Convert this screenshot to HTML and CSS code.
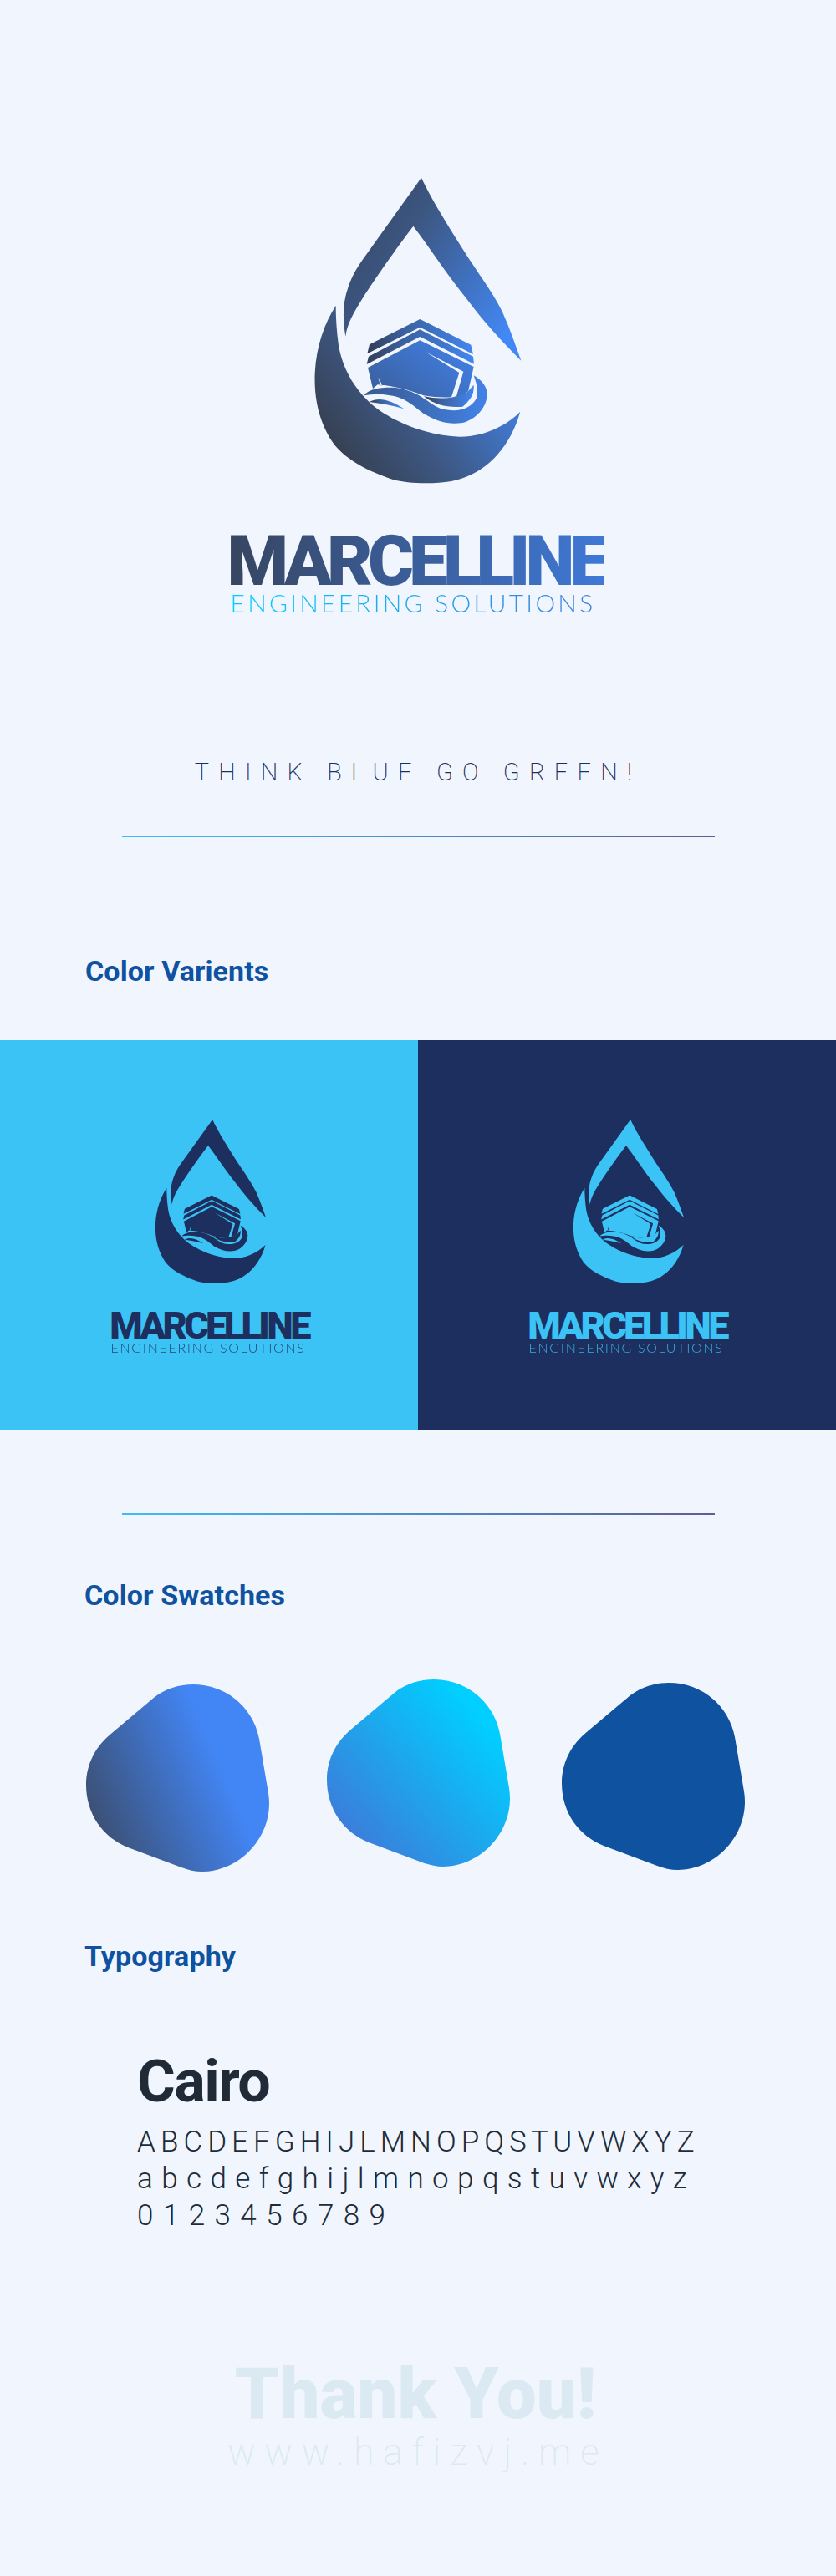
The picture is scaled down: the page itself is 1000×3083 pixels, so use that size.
FILE: index.html
```html
<!DOCTYPE html>
<html lang="en">
<head>
<meta charset="utf-8">
<title>Marcelline Engineering Solutions</title>
<link rel="stylesheet" href="styles.css">
</head>
<body>
<svg class="defs" aria-hidden="true">
  <defs>
    <linearGradient id="g-arc" x1="0" y1="0.1" x2="1" y2="0.75">
      <stop offset="0" stop-color="#364562"/><stop offset="0.35" stop-color="#3c5680"/><stop offset="1" stop-color="#4388f5"/>
    </linearGradient>
    <linearGradient id="g-cres" x1="0.1" y1="0.85" x2="1" y2="0.3">
      <stop offset="0" stop-color="#363f50"/><stop offset="0.4" stop-color="#3d5884"/><stop offset="1" stop-color="#4388f5"/>
    </linearGradient>
    <linearGradient id="g-boat" x1="0" y1="0.5" x2="1" y2="0.5">
      <stop offset="0" stop-color="#323e55"/><stop offset="0.35" stop-color="#3b62a0"/><stop offset="1" stop-color="#4286f0"/>
    </linearGradient>
    <linearGradient id="g-hull" x1="0" y1="0.9" x2="1" y2="0.2">
      <stop offset="0" stop-color="#3a5f9c"/><stop offset="1" stop-color="#4280e6"/>
    </linearGradient>
    <linearGradient id="g-wave" x1="0" y1="0.5" x2="1" y2="0.5">
      <stop offset="0" stop-color="#3a5a90"/><stop offset="1" stop-color="#4282e6"/>
    </linearGradient>
    <linearGradient id="g-sw1" x1="0" y1="0.85" x2="0.9" y2="0.45">
      <stop offset="0" stop-color="#3b4a66"/><stop offset="0.85" stop-color="#4285f4"/>
    </linearGradient>
    <linearGradient id="g-sw2" x1="0.1" y1="0.9" x2="0.85" y2="0.2">
      <stop offset="0" stop-color="#3f78d8"/><stop offset="1" stop-color="#00cfff"/>
    </linearGradient>
    <path id="arc" d="M432 38C470 120 540 230 600 325C650 400 700 470 725 525C750 580 770 640 790 695C720 625 660 560 600 480C530 395 470 300 403 212C340 295 270 395 225 465C190 520 165 565 160 608C150 550 148 490 170 430C185 385 205 355 230 320Z"/>
    <path id="crescent" d="M125 497C85 560 55 640 50 740C47 820 60 900 105 975C150 1050 250 1095 330 1122C380 1136 470 1140 540 1128C660 1105 750 1010 787 878C730 935 650 968 570 968C470 966 350 925 270 865C200 810 150 730 135 640C128 590 125 540 125 497Z"/>
    <path id="band1" d="M427 546L610 638L618 672L427 575L238 670L246 637Z"/>
    <path id="band2" d="M427 583L618 680L621 707L427 609L236 708L243 680Z"/>
    <path id="hull" fill-rule="evenodd" d="M427 622L620 717L600 805C590 815 575 822 562 823L542 826C500 828 470 825 440 820C400 805 340 785 275 781L258 795L240 720ZM445 662L583 734L557 826L540 826L568 738ZM278 755L292 784L284 784Z"/>
    <path id="wave" d="M226 820C245 795 290 790 340 792C380 797 420 815 440 830C480 858 500 872 530 872C570 878 610 865 630 830L632 785L620 748C650 765 668 790 668 815C668 860 630 905 580 918C530 925 490 915 440 885C400 855 370 825 320 820C290 812 250 815 226 820Z"/>
    <path id="sliver" d="M440 822C490 835 550 832 595 810L620 782C622 815 610 835 580 860C530 865 480 855 440 822Z"/>
    <path id="crest" d="M245 843C280 825 320 835 370 868C330 855 285 848 245 843Z"/>
    <g id="mark">
      <use href="#arc"/><use href="#crescent"/><use href="#band1"/><use href="#band2"/><use href="#hull"/><use href="#wave"/><use href="#sliver"/><use href="#crest"/>
    </g>
    <path id="blob" d="M82 15C95 5 112 0 128 0C168 0 200 28 207 65L218 130C226 180 185 224 139 224C130 224 122 222 114 219L50 195C20 183 0 155 0 120C0 95 12 73 31 58Z"/>
  </defs>
</svg>

<main class="page">
  <header class="hero">
    <svg class="hero-mark" viewBox="0 0 840 1200" role="img" aria-label="Marcelline logo">
      <use href="#arc" fill="url(#g-arc)"/>
      <use href="#crescent" fill="url(#g-cres)"/>
      <use href="#band1" fill="url(#g-boat)"/>
      <use href="#band2" fill="url(#g-boat)"/>
      <use href="#hull" fill="url(#g-hull)"/>
      <use href="#wave" fill="url(#g-wave)"/>
      <use href="#sliver" fill="url(#g-boat)"/>
      <use href="#crest" fill="url(#g-boat)"/>
    </svg>
    <div class="wordmark wordmark-hero">MARCELLINE</div>
    <div class="subline subline-hero">ENGINEERING SOLUTIONS</div>
  </header>

  <p class="tagline">THINK BLUE GO GREEN!</p>
  <div class="rule rule-first"></div>

  <h2 class="title title-variants">Color Varients</h2>

  <section class="variants">
    <div class="variant variant-light">
      <svg class="variant-mark" viewBox="0 0 840 1200" aria-hidden="true"><use href="#mark"/></svg>
      <div class="wordmark wordmark-small">MARCELLINE</div>
      <div class="subline subline-small">ENGINEERING SOLUTIONS</div>
    </div>
    <div class="variant variant-dark">
      <svg class="variant-mark" viewBox="0 0 840 1200" aria-hidden="true"><use href="#mark"/></svg>
      <div class="wordmark wordmark-small">MARCELLINE</div>
      <div class="subline subline-small">ENGINEERING SOLUTIONS</div>
    </div>
  </section>

  <div class="rule rule-second"></div>

  <h2 class="title title-swatches">Color Swatches</h2>

  <section class="swatches">
    <svg class="swatch swatch-a" viewBox="0 0 220 224" aria-hidden="true"><use href="#blob" fill="url(#g-sw1)"/></svg>
    <svg class="swatch swatch-b" viewBox="0 0 220 224" aria-hidden="true"><use href="#blob" fill="url(#g-sw2)"/></svg>
    <svg class="swatch swatch-c" viewBox="0 0 220 224" aria-hidden="true"><use href="#blob" fill="#0f52a0"/></svg>
  </section>

  <h2 class="title title-type">Typography</h2>

  <section class="specimen">
    <div class="specimen-name">Cairo</div>
    <div class="specimen-line specimen-upper">A B C D E F G H I J L M N O P Q S T U V W X Y Z</div>
    <div class="specimen-line specimen-lower">a b c d e f g h i j l m n o p q s t u v w x y z</div>
    <div class="specimen-line specimen-digits">0 1 2 3 4 5 6 7 8 9</div>
  </section>

  <footer class="thanks">
    <div class="thanks-big">Thank You!</div>
    <div class="thanks-url">www.hafizvj.me</div>
  </footer>
</main>
</body>
</html>
```
FILE: styles.css
```css
* { box-sizing: border-box; margin: 0; padding: 0; }
html, body { background: #f1f6fe; }
body { font-family: "Roboto", "Liberation Sans", sans-serif; }
.defs { position: absolute; width: 0; height: 0; }
.page { width: 1000px; height: 3083px; overflow: hidden; display: flex; flex-direction: column; }

.hero { padding-top: 200px; display: flex; flex-direction: column; align-items: center; }
.hero-mark { width: 280px; height: 400px; display: block; }

.wordmark { font-weight: 900; white-space: nowrap; }
.wordmark-hero {
  margin-top: 39px; margin-left: -6px; font-size: 84px; line-height: 66px; letter-spacing: -6px;
  background: linear-gradient(90deg, #374560, #3f78d6);
  -webkit-background-clip: text; background-clip: text; color: transparent;
}
.subline { font-family: "Lato", "Liberation Sans", sans-serif; font-weight: 300; white-space: nowrap; }
.subline-hero {
  margin-top: 1px; margin-left: -12px; font-size: 30px; line-height: 30px; letter-spacing: 3.2px;
  background: linear-gradient(90deg, #00cfff, #3f7ede);
  -webkit-background-clip: text; background-clip: text; color: transparent;
}

.tagline {
  margin-top: 170px; text-align: center; font-size: 29px; line-height: 36px; font-weight: 200;
  letter-spacing: 11.2px; color: #1d2f5f;
}
.rule { width: 709px; height: 2px; margin-left: 146px; background: linear-gradient(90deg, #3dbcf8, #5f5c96); }
.rule-first { margin-top: 58px; }
.rule-second { margin-top: 99px; }

.title { font-size: 34px; line-height: 40px; font-weight: 700; color: #0f52a0; letter-spacing: 0.1px; }
.title-variants { margin: 140px 0 0 102px; }
.title-swatches { margin: 76px 0 0 101px; }
.title-type { margin: 72px 0 0 101px; }

.variants { margin-top: 63px; display: grid; grid-template-columns: 1fr 1fr; height: 467px; }
.variant { display: flex; flex-direction: column; align-items: center; padding-top: 88px; padding-left: 4px; }
.variant-light { background: #3cc3f5; color: #1d2f5f; fill: #1d2f5f; }
.variant-dark { background: #1d2f5f; color: #3cc3f5; fill: #3cc3f5; }
.variant-mark { width: 150px; height: 214.5px; display: block; }
.wordmark-small { margin-top: 22px; margin-left: -4px; font-size: 45px; line-height: 34px; letter-spacing: -3.6px; }
.subline-small { margin-top: 1px; margin-left: -6px; font-size: 16px; line-height: 16px; letter-spacing: 1.7px; opacity: 0.85; }

.swatches { margin-top: 80px; height: 240px; display: flex; align-items: flex-start; padding-left: 103px; }
.swatch { width: 220px; height: 224px; display: block; flex: none; }
.swatch-a { margin-top: 7px; }
.swatch-b { margin-left: 68px; margin-top: 1px; }
.swatch-c { margin-left: 61px; margin-top: 5px; }

.specimen { margin-top: 79px; padding-left: 164px; color: #212b38; }
.specimen-name { font-size: 70px; line-height: 102px; font-weight: 700; letter-spacing: -1.5px; }
.specimen-line { font-size: 35px; line-height: 44px; font-weight: 300; white-space: nowrap; }
.specimen-upper { letter-spacing: -1.25px; }
.specimen-lower { letter-spacing: 0.93px; }
.specimen-digits { letter-spacing: 1.45px; }

.thanks { margin-top: 146px; display: flex; flex-direction: column; align-items: center; color: #dbe9f2; }
.thanks-big { font-size: 85px; line-height: 90px; font-weight: 900; margin-left: -6px; }
.thanks-url { font-size: 44px; line-height: 50px; font-weight: 200; letter-spacing: 11px; }
```
